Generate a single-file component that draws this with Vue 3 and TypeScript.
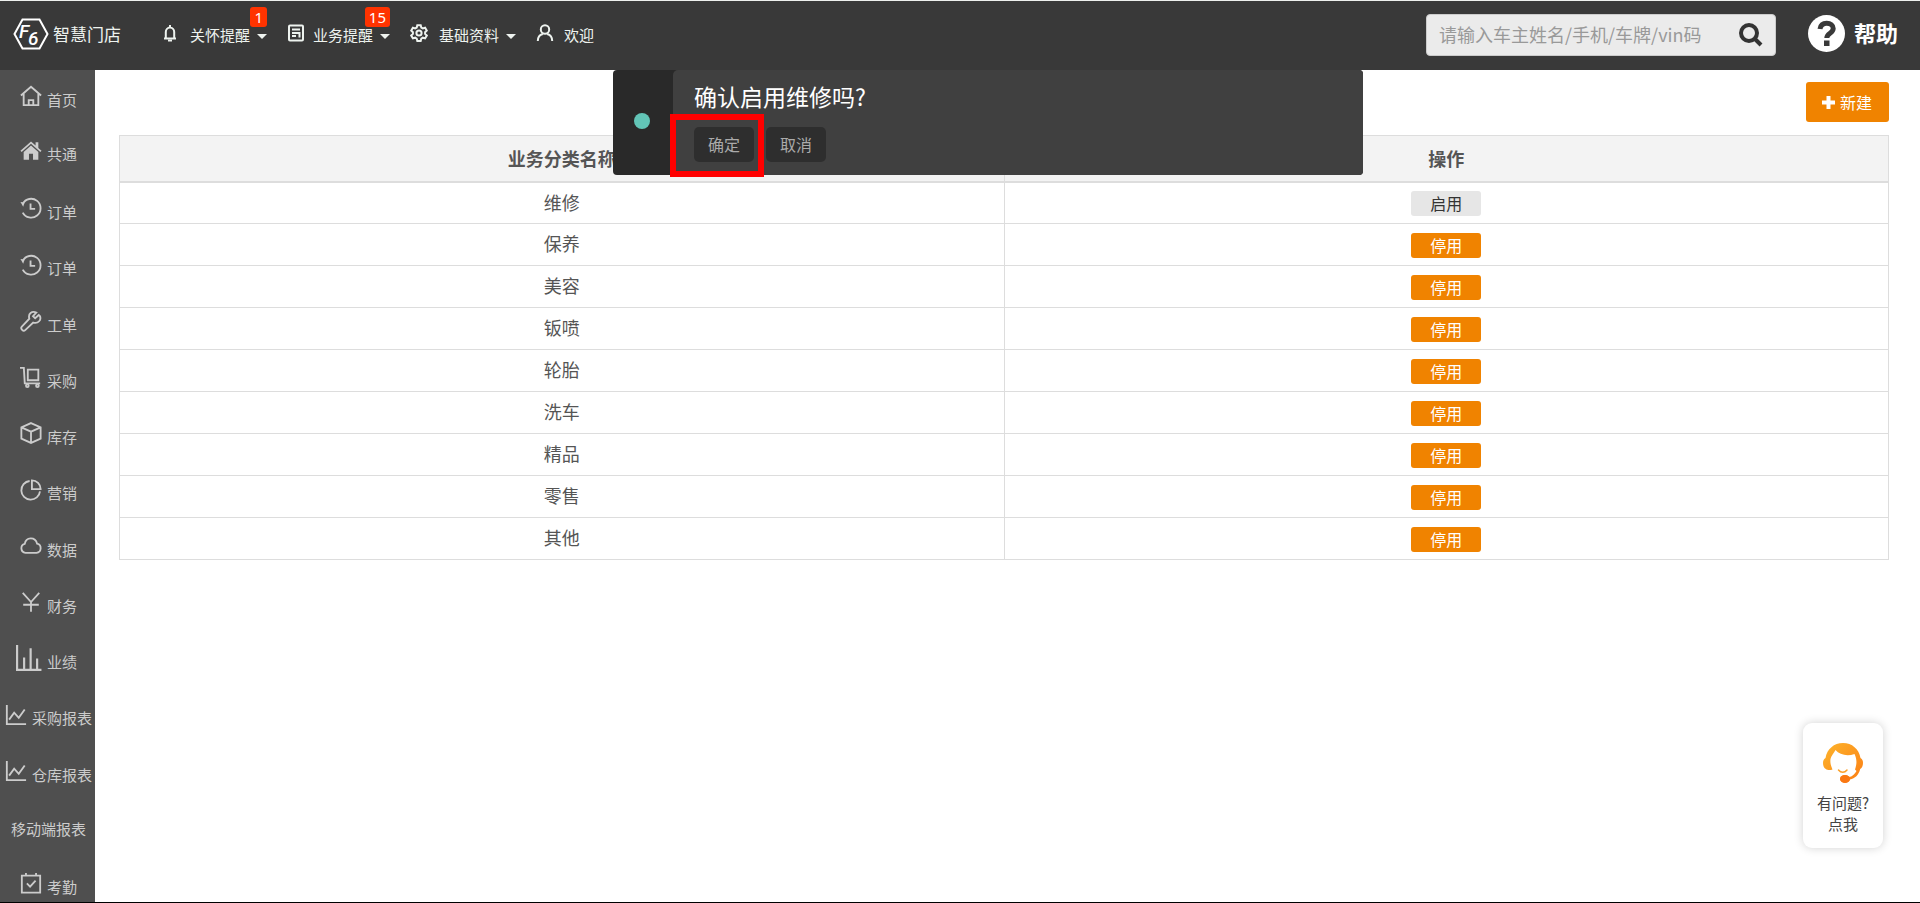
<script setup lang="ts">
import { ref } from 'vue'

interface NavItem { icon: string; label: string; badge?: string; caret: boolean }
interface MenuItem { icon: string; label: string }
interface Category { name: string; enabled: boolean }

const navItems: NavItem[] = [
  { icon: 'bell', label: '关怀提醒', badge: '1', caret: true },
  { icon: 'doc', label: '业务提醒', badge: '15', caret: true },
  { icon: 'gear', label: '基础资料', caret: true },
  { icon: 'user', label: '欢迎', caret: false },
]

const menuItems: MenuItem[] = [
  { icon: 'home', label: '首页' },
  { icon: 'house', label: '共通' },
  { icon: 'history', label: '订单' },
  { icon: 'history', label: '订单' },
  { icon: 'wrench', label: '工单' },
  { icon: 'cart', label: '采购' },
  { icon: 'cube', label: '库存' },
  { icon: 'pie', label: '营销' },
  { icon: 'cloud', label: '数据' },
  { icon: 'yen', label: '财务' },
  { icon: 'bars', label: '业绩' },
  { icon: 'line', label: '采购报表' },
  { icon: 'line', label: '仓库报表' },
  { icon: '', label: '移动端报表' },
  { icon: 'check', label: '考勤' },
]

const categories: Category[] = [
  { name: '维修', enabled: false },
  ...['保养', '美容', '钣喷', '轮胎', '洗车', '精品', '零售', '其他'].map((name) => ({ name, enabled: true })),
]

const keyword = ref('')
</script>

<template>
  <div class="page">
    <header class="topbar">
      <a class="brand" href="#">
        <svg class="brand-mark" viewBox="0 0 36 32" aria-hidden="true">
          <path d="M9.500 1.500h17L34.500 16l-8 14.500h-17L1.500 16z" />
          <text x="6" y="20">F</text>
          <text x="15" y="27">6</text>
        </svg>
        <span>智慧门店</span>
      </a>
      <nav class="nav">
        <a v-for="item in navItems" :key="item.label" class="nav-item" :class="'nav-' + item.icon" href="#">
          <svg class="nav-icon" viewBox="0 0 18 18" aria-hidden="true">
            <g v-if="item.icon === 'bell'">
              <path d="M3 14.500h12M4.800 14.500V8a4.200 4.500 0 0 1 8.400 0v6.500M9 3.500V1" />
              <path d="M7 16.500h4" />
            </g>
            <g v-else-if="item.icon === 'doc'">
              <rect x="2" y="1.500" width="14" height="15" rx="1" />
              <path d="M5 5.500h8M5 9h7.500v4.500M5 12h4" />
            </g>
            <g v-else-if="item.icon === 'gear'">
              <path d="M7.300 1.200h3.400l.6 2.300 1.500.9 2.300-.7 1.700 2.900-1.700 1.600v1.700l1.700 1.600-1.700 2.900-2.300-.7-1.500.9-.6 2.300H7.300l-.6-2.300-1.500-.9-2.300.7-1.700-2.900 1.700-1.600V8.200L1.200 6.600l1.700-2.900 2.300.7 1.500-.9z" />
              <circle cx="9" cy="9" r="2.600" />
            </g>
            <g v-else>
              <circle cx="9" cy="5.500" r="4.200" />
              <path d="M1.800 17c0-3.500 2.200-6.200 5-7M16.200 17c0-3.500-2.200-6.200-5-7" />
            </g>
          </svg>
          <span>{{ item.label }}</span>
          <i v-if="item.caret" class="caret"></i>
          <b v-if="item.badge" class="badge">{{ item.badge }}</b>
        </a>
      </nav>
      <form class="search" @submit.prevent>
        <input v-model="keyword" type="text" aria-label="搜索" placeholder="请输入车主姓名/手机/车牌/vin码" />
        <button type="submit" aria-label="搜索">
          <svg viewBox="0 0 24 24" aria-hidden="true"><circle cx="10" cy="10" r="8" /><path d="M16 16l6 6" /></svg>
        </button>
      </form>
      <a class="help" href="#">
        <svg viewBox="0 0 37 37" aria-hidden="true">
          <circle cx="18.500" cy="18.500" r="18.500" fill="#fff" />
          <path d="M12 14c.6-4 3.300-5.700 6.700-5.700 3.800 0 6.500 2 6.500 5.200 0 4.800-6.400 4.600-6.400 9.500" fill="none" stroke="#393939" stroke-width="5" />
          <rect x="16" y="25.500" width="5.500" height="5.500" fill="#393939" />
        </svg>
        <span>帮助</span>
      </a>
    </header>

    <div class="body">
      <aside class="sidebar">
        <a v-for="(item, i) in menuItems" :key="i" class="menu-item" :class="{ raised: item.icon === 'house' || !item.icon }" href="#">
          <svg v-if="item.icon" class="menu-icon" :class="'menu-' + item.icon" viewBox="0 0 24 24" aria-hidden="true">
            <path v-if="item.icon === 'home'" d="M1 11.500L12 2l11 9.500M4 9.500V22h16V9.500M9.500 22v-5.500h5V22" />
            <g v-else-if="item.icon === 'house'" class="solid">
              <path d="M12 1.500L.5 11.800l1.300 1.400L12 4.200l10.200 9 1.300-1.400L20 8.700V2.500h-3v3.400z" />
              <path d="M12 6L4 13v8.500h5.800V15h4.400v6.500H20V13z" />
            </g>
            <g v-else-if="item.icon === 'history'">
              <path d="M3 7.500A10.300 10.300 0 1 1 3 17M11.500 7v6h5" />
              <path class="solid" d="M.5 5.500l4.500.5-1.500 4.500z" />
            </g>
            <path v-else-if="item.icon === 'wrench'" d="M20.500 5.500l-4 3.500-2.300-2.200 3.600-4C13 .7 8.500 4 10.200 9.500L2 18.200c-2 2.200 1.500 5.700 3.700 3.700l8.700-8.200c5.600 1.600 9.200-3 7.300-7.200z" />
            <g v-else-if="item.icon === 'cart'">
              <path d="M0 2h4.200l1 17H22M8.500 4H20v11.500H8.500z" />
              <circle cx="8" cy="21.500" r="1.500" /><circle cx="19" cy="21.500" r="1.500" />
            </g>
            <path v-else-if="item.icon === 'cube'" d="M12 1.200l10.500 4.600v12.400L12 22.800 1.500 18.200V5.800zM1.500 5.800L12 10.500l10.500-4.700M12 10.500v12.300" />
            <path v-else-if="item.icon === 'pie'" d="M10.500 2.200A10.200 10.200 0 1 0 21.800 13.500M13 1.500v9.500h9.500a9.500 9.500 0 0 0-9.500-9.500z" />
            <path v-else-if="item.icon === 'cloud'" d="M6 19.500a5 5 0 0 1-.8-9.800C6.500 2 16.500 1.500 18.700 9.500a5.100 5.100 0 0 1-.7 10z" />
            <path v-else-if="item.icon === 'yen'" d="M3 2l9 10 9-10M3.500 15h17M12 12v10.500" />
            <path v-else-if="item.icon === 'bars'" d="M1 0v23h22.500M7.500 11.500V22M13.500 3v19M19.500 12.500V22" />
            <path v-else-if="item.icon === 'line'" d="M2 1v21h21M4.500 17l5.500-7.500 5 5.500L21.500 6" />
            <path v-else d="M2 4h20v18.500H2zM6.500 1v4M17.500 1v4M7.500 12.500l3.500 3.500 6-6.500" />
          </svg>
          <span>{{ item.label }}</span>
        </a>
      </aside>

      <main class="content">
        <button class="create" type="button">
          <svg viewBox="0 0 13 13" aria-hidden="true"><path d="M6.500 0v13M0 6.500h13" /></svg>
          <span>新建</span>
        </button>
        <table class="grid">
          <thead>
            <tr><th scope="col">业务分类名称</th><th scope="col">操作</th></tr>
          </thead>
          <tbody>
            <tr v-for="row in categories" :key="row.name">
              <td>{{ row.name }}</td>
              <td><button type="button" class="toggle" :class="{ off: !row.enabled }">{{ row.enabled ? '停用' : '启用' }}</button></td>
            </tr>
          </tbody>
        </table>
      </main>
    </div>

    <section class="toast" role="alertdialog" aria-labelledby="toast-title">
      <div class="toast-side"><i class="dot"></i></div>
      <div class="toast-main">
        <div id="toast-title" class="toast-title">确认启用维修吗?</div>
        <div class="toast-actions">
          <button type="button" class="marked">确定</button>
          <button type="button">取消</button>
        </div>
      </div>
    </section>

    <a class="service" href="#">
      <svg viewBox="0 0 40 40" aria-hidden="true">
        <defs>
          <linearGradient id="warm" x1="0" y1="0" x2="1" y2="1">
            <stop offset="0" stop-color="#fdb52c" /><stop offset="1" stop-color="#fb7d14" />
          </linearGradient>
        </defs>
        <path fill="url(#warm)" d="M2.500 15C4 6 11 0 20 0s16 6 17.500 15c2 1 2.500 3 2.500 5s-.8 5-2.800 6c-1.500 6-5.200 9.500-10.200 10.500a5 3.900 0 1 1-.5-2.500c3-.7 5.500-3 7-6l-1.500-1.500c2-6 2-10-.5-15.500-7 2.500-15 1-19-4C11 10 8 13 7.500 16c-.5 4 .5 7 2 10.500C7 27.500 4 27 2.800 26 .8 25 0 22 0 20s.5-4 2.500-5z" />
        <ellipse cx="22" cy="36" rx="5" ry="4" fill="#fa7814" />
        <path fill="none" stroke="#fba02a" stroke-width="1.500" stroke-linecap="round" d="M15.500 27c2.500 3 6 3 8.500 0" />
      </svg>
      <span>有问题?</span>
      <span>点我</span>
    </a>
  </div>
</template>

<style>
body {
  margin: 0;
  overflow: hidden;
}
</style>

<style scoped>
.page {
  position: relative;
  box-sizing: border-box;
  height: 100vh;
  display: flex;
  flex-direction: column;
  border-top: 1px solid #eef0ee;
  border-bottom: 1px solid #000;
  background: #fff;
  color: #555;
  font-family: "Noto Sans CJK SC", sans-serif;
  font-size: 18px;
  overflow: hidden;
}
a { color: inherit; text-decoration: none; }
button, input { font-family: inherit; margin: 0; border: 0; padding: 0; }
button { cursor: pointer; }
svg { flex: none; display: block; }

.topbar {
  flex: none;
  height: 69px;
  display: flex;
  align-items: flex-start;
  background: #393939;
  color: #eef3ef;
}
.brand {
  display: flex;
  align-items: center;
  gap: 4px;
  padding: 17px 0 0 13px;
  width: 151px;
  box-sizing: border-box;
  font-size: 17px;
  line-height: 32px;
}
.brand-mark { width: 36px; height: 32px; }
.brand-mark path { fill: none; stroke: #fff; stroke-width: 2; }
.brand-mark text { fill: #fff; font: italic 500 19px Roboto, sans-serif; }

.nav { display: flex; flex: 1; padding-top: 21px; }
.nav-item {
  position: relative;
  display: flex;
  align-items: center;
  height: 24px;
  margin-right: 20px;
  font-size: 15px;
}
.nav-icon {
  width: 18px;
  height: 18px;
  margin: 0 10px 2px 0;
  fill: none;
  stroke: currentColor;
  stroke-width: 2;
}
.nav-bell .nav-icon { margin-right: 11px; margin-left: -3px; }
.nav-bell { padding-left: 13px; }
.nav-doc .nav-icon { margin-right: 8px; }
.nav-gear .nav-icon { margin-right: 11px; }
.caret {
  margin-left: 7px;
  margin-top: 4px;
  border: 5px solid transparent;
  border-top-color: currentColor;
  border-bottom: 0;
}
.badge {
  position: absolute;
  right: 0;
  top: -15px;
  padding: 0 4px;
  border-radius: 3px;
  background: #ff3300;
  color: #fff;
  font: 15px/20px "Noto Sans", sans-serif;
}

.search {
  box-sizing: border-box;
  width: 350px;
  height: 42px;
  margin: 13px 32px 0 0;
  display: flex;
  border: 1px solid #ccc;
  border-radius: 4px;
  background: #ebebeb;
}
.search input {
  flex: 1;
  min-width: 0;
  padding: 0 0 2px 12px;
  background: none;
  outline: 0;
  font-size: 18px;
  color: #333;
}
.search input::placeholder { color: #999; opacity: 1; }
.search button { width: 36px; background: none; }
.search svg { width: 24px; height: 24px; fill: none; stroke: #333; stroke-width: 4; }
.help {
  display: flex;
  align-items: center;
  gap: 9px;
  padding: 13px 22px 0 0;
  color: #fff;
  font-size: 22px;
  font-weight: 700;
  line-height: 37px;
}
.help svg { width: 37px; height: 37px; }
.help span { padding-bottom: 2px; }

.body { flex: 1; min-height: 0; display: flex; }
.sidebar {
  flex: none;
  width: 95px;
  padding: 1px 0 0 2px;
  box-sizing: border-box;
  overflow: hidden;
  background: #4f4f4f;
  color: #ccc;
  font-size: 15px;
}
.menu-item {
  box-sizing: border-box;
  height: 56px;
  display: flex;
  align-items: center;
  justify-content: center;
  gap: 5px;
  white-space: nowrap;
}
.menu-item:nth-child(4n) { height: 57px; }
.raised { padding-bottom: 4px; }
.menu-icon {
  width: 22px;
  height: 22px;
  margin-bottom: 6px;
  fill: none;
  stroke: currentColor;
  stroke-width: 2;
}
.menu-house { margin-bottom: 4px; }
.menu-bars { width: 26px; height: 26px; margin-left: -4px; }
.menu-icon .solid { fill: currentColor; stroke: none; }

.content {
  flex: 1;
  min-width: 0;
  display: flex;
  flex-direction: column;
  padding: 12px 31px 0 24px;
}
.create {
  align-self: flex-end;
  display: flex;
  align-items: center;
  gap: 5px;
  height: 40px;
  margin-bottom: 13px;
  padding: 0 17px 0 16px;
  border-radius: 3px;
  background: #f08300;
  color: #fff;
  font-size: 16px;
}
.create svg { width: 13px; height: 13px; stroke: #fff; stroke-width: 4; }

.grid {
  width: 100%;
  table-layout: fixed;
  border-collapse: collapse;
  text-align: center;
}
.grid th, .grid td {
  border: 1px solid #ddd;
  padding: 9px 8px 7px;
  line-height: 25px;
  vertical-align: middle;
}
.grid th {
  padding: 10px 8px;
  border-bottom-width: 2px;
  background: #f3f3f3;
  color: #555;
  font-weight: 700;
}
.grid tbody tr:first-child td { padding-top: 7px; }
.grid tbody td:first-child { padding-top: 6px; padding-bottom: 8px; }
.toggle {
  display: block;
  width: 70px;
  height: 25px;
  margin: 0 auto;
  border-radius: 3px;
  background: #f08300;
  color: #fff;
  font-size: 16px;
  line-height: 25px;
}
.toggle.off { background: #e6e6e6; color: #333; }

.toast {
  position: absolute;
  top: 69px;
  left: calc(50% - 347px);
  width: 750px;
  height: 105px;
  display: flex;
  border-radius: 4px;
  background: #292929;
}
.toast-side {
  box-sizing: border-box;
  width: 60px;
  padding: 0 2px 4px 0;
  display: flex;
  align-items: center;
  justify-content: center;
}
.dot { width: 16px; height: 16px; border-radius: 50%; background: #62c4b6; }
.toast-main {
  flex: 1;
  padding: 10px 21px 0;
  border-radius: 5px 4px 4px 0;
  background: #404040;
}
.toast-title {
  color: #fff;
  font-family: KaiTi, STKaiti, "Noto Sans CJK SC", serif;
  font-size: 23px;
  line-height: 32px;
}
.toast-actions { display: flex; gap: 12px; padding-top: 15px; }
.toast-actions button {
  position: relative;
  width: 60px;
  height: 35px;
  padding-bottom: 2px;
  border-radius: 5px;
  background: #2e2e2e;
  color: #aaa;
  font-size: 16px;
}
.marked::after {
  content: "";
  position: absolute;
  inset: -13px -10px -15px -24px;
  border: 6px solid #f00;
}

.service {
  position: absolute;
  right: 37px;
  bottom: 54px;
  width: 80px;
  height: 125px;
  box-sizing: border-box;
  padding-top: 20px;
  display: flex;
  flex-direction: column;
  align-items: center;
  border-radius: 9px;
  background: #fff;
  box-shadow: 0 0 10px rgba(0, 0, 0, 0.18);
  color: #444;
  font-size: 15px;
  line-height: 21px;
}
.service svg { width: 40px; height: 40px; margin-bottom: 9px; }
</style>
